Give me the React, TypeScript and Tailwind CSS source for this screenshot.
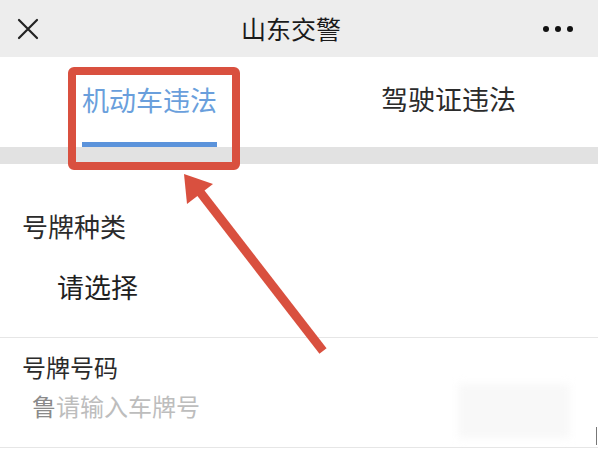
import React from "react";

const cjk = { fontFamily: '"Noto Sans CJK SC", "Noto Sans", sans-serif' };

function CloseIcon() {
  return (
    <svg width="22" height="22" viewBox="0 0 22 22" className="text-[#222]">
      <path d="M2 2 L20 20 M20 2 L2 20" stroke="currentColor" strokeWidth="2.2" strokeLinecap="round" />
    </svg>
  );
}

function MoreIcon() {
  return (
    <div className="flex items-center gap-[6px]">
      <span className="h-[6px] w-[6px] rounded-full bg-[#111]" />
      <span className="h-[6px] w-[6px] rounded-full bg-[#111]" />
      <span className="h-[6px] w-[6px] rounded-full bg-[#111]" />
    </div>
  );
}

function Arrow() {
  return (
    <svg
      className="pointer-events-none absolute left-0 top-0"
      width="598"
      height="449"
      viewBox="0 0 598 449"
    >
      <path d="M323 351 L200 192" stroke="#d9503f" strokeWidth="9" strokeLinecap="butt" />
      <polygon points="184,174 187,204 213,184" fill="#d9503f" />
    </svg>
  );
}

export default function App() {
  return (
    <div className="relative h-[449px] w-[598px] overflow-hidden bg-white" style={cjk}>
      {/* Title bar */}
      <div className="flex h-[57px] items-center justify-between bg-[#ededed] pl-[17px] pr-[25px]">
        <CloseIcon />
        <h1 className="text-[25px] leading-none text-[#1a1a1a]">山东交警</h1>
        <MoreIcon />
      </div>

      {/* Tabs */}
      <div className="grid h-[90px] grid-cols-2">
        <div className="flex flex-col items-center justify-end">
          <div className="flex flex-col">
            <span className="text-[27px] leading-none text-[#6a9fdc]">机动车违法</span>
            <span className="mt-[29px] h-[5px] w-full bg-[#5b93db]" />
          </div>
        </div>
        <div className="flex items-start justify-center pt-[28px]">
          <span className="text-[27px] leading-none text-[#2b2b2b]">驾驶证违法</span>
        </div>
      </div>
      <div className="h-[17px] bg-[#e2e2e2]" />

      {/* Plate type */}
      <div className="border-b border-[#e6e6e6] pl-[22px]">
        <div className="pt-[49px] text-[26px] leading-none text-[#2b2b2b]">号牌种类</div>
        <div className="pb-[37px] pl-[35px] pt-[34px] text-[27px] leading-none text-[#1f1f1f]">请选择</div>
      </div>

      {/* Plate number */}
      <div className="relative h-[110px] border-b border-[#e6e6e6] pl-[22px]">
        <div className="pt-[17px] text-[24px] leading-none text-[#2b2b2b]">号牌号码</div>
        <div className="pl-[10px] pt-[15px] text-[24px] leading-none">
          <span className="text-[#8a8a8a]">鲁</span>
          <span className="text-[#bdbdbd]">请输入车牌号</span>
        </div>
        <div className="absolute left-[458px] top-[46px] h-[54px] w-[112px] bg-[#f8f8f8] blur-[4px]" />
        <div className="absolute right-[1px] top-[89px] h-[18px] w-[1px] bg-[#777]" />
      </div>

      {/* Highlight box and arrow */}
      <div className="pointer-events-none absolute left-[68px] top-[67px] h-[103px] w-[172px] rounded-[6px] border-[8px] border-[#d9503f]" />
      <Arrow />
    </div>
  );
}
